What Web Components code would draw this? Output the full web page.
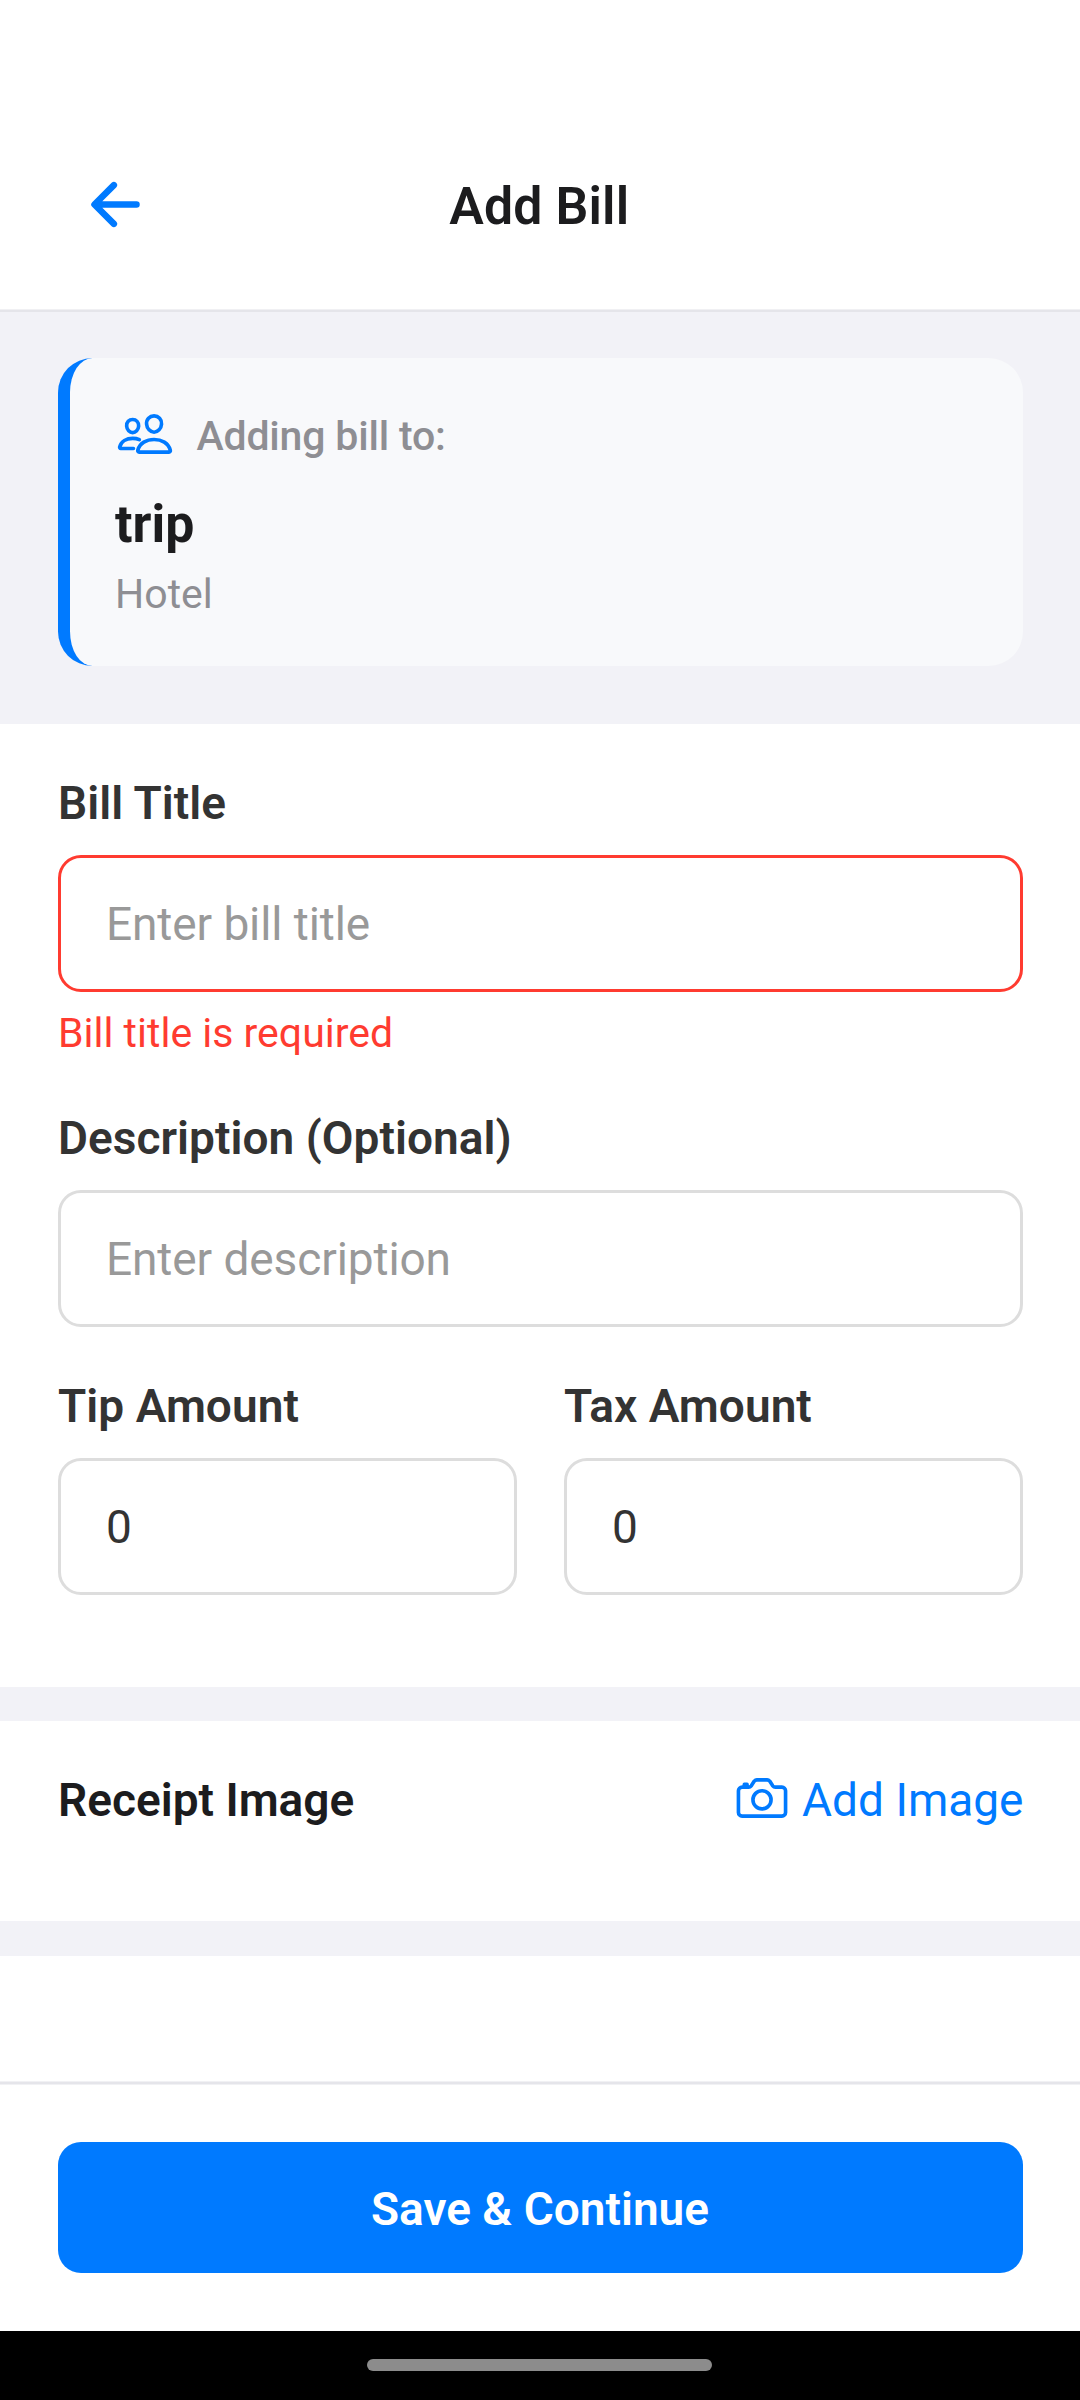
<!DOCTYPE html>
<html lang="en">
<head>
<meta charset="utf-8">
<title>Add Bill</title>
<style>
  html, body { margin: 0; padding: 0; background: #fff; }
  body { font-family: Roboto, "Noto Sans", sans-serif; width: 1080px; height: 2400px; overflow: hidden; }
</style>
</head>
<body>
<bill-screen></bill-screen>

<script>
const define = (name, html) => {
  const template = document.createElement('template');
  template.innerHTML = html;
  customElements.define(name, class extends HTMLElement {
    constructor() {
      super();
      this.attachShadow({ mode: 'open' }).append(template.content.cloneNode(true));
    }
  });
};

const ICONS = {
  back: '<path stroke-width="48" d="M244 400L100 256l144-144M120 256h292"/>',
  people: '<path stroke-width="32" d="M402 168c-2.93 40.67-33.1 72-66 72s-63.12-31.32-66-72c-3-42.31 26.37-72 66-72s69 30.46 66 72z"/>' +
    '<path stroke-width="32" d="M336 304c-65.17 0-127.84 32.37-143.54 95.41-2.08 8.34 3.15 16.59 11.72 16.59h263.65c8.57 0 13.77-8.25 11.72-16.59C463.85 335.36 401.18 304 336 304z"/>' +
    '<path stroke-width="32" d="M200 185.94c-2.34 32.48-26.72 58.06-53 58.06s-50.7-25.57-53-58.06C91.61 152.15 115.34 128 147 128s55.39 24.77 53 57.94z"/>' +
    '<path stroke-width="32" d="M206 306c-18.05-8.27-37.93-11.45-59-11.45-52 0-102.1 25.85-114.65 76.2-1.65 6.66 2.53 13.25 9.37 13.25H154"/>',
  camera: '<path stroke-width="32" d="M350.54 148.68l-26.62-42.06C318.31 100.08 310.62 96 302 96h-92c-8.62 0-16.31 4.08-21.92 10.62l-26.62 42.06C155.85 155.23 148.62 160 140 160H80a32 32 0 00-32 32v192a32 32 0 0032 32h352a32 32 0 0032-32V192a32 32 0 00-32-32h-59c-8.65 0-16.85-4.77-22.46-11.32z"/>' +
    '<circle stroke-width="32" cx="256" cy="272" r="80"/><path stroke-width="32" d="M124 158v-22h-24v22"/>'
};

customElements.define('line-icon', class extends HTMLElement {
  constructor() {
    super();
    this.attachShadow({ mode: 'open' });
  }
  connectedCallback() {
    this.shadowRoot.innerHTML = `
      <style>
        :host { display: block; flex: none; width: 58px; height: 58px; color: #007aff; }
        svg { display: block; width: 100%; height: 100%; }
      </style>
      <svg viewBox="0 0 512 512" fill="none" stroke="currentColor" stroke-linecap="round" stroke-linejoin="round">${ICONS[this.getAttribute('name')]}</svg>`;
  }
});

define('screen-header', `
  <style>
    :host { display: grid; grid-template-columns: 150px 1fr 150px; align-items: start; box-sizing: border-box;
            height: 312px; background: #fff; border-bottom: 2px solid #e5e5ea; box-shadow: inset 0 -1px #f0f0f3; }
    line-icon { width: 69px; height: 69px; margin: 169.7px 0 0 80.5px; }
    h1 { margin: 176px 1.5px 0 0; text-align: center; font-size: 51.75px; line-height: 61px; font-weight: 600;
         letter-spacing: .14px; color: #1c1c1e; }
  </style>
  <line-icon name="back"></line-icon>
  <h1><slot></slot></h1>`);

define('group-card', `
  <style>
    :host { display: block; box-sizing: border-box; height: 307.5px; margin: 46px 57px 58px 58px; padding: 46px 45px;
            border-left: 12px solid #007aff; border-radius: 34.5px; background: #f8f9fb; }
    .head { display: flex; align-items: flex-start; gap: 22.5px; height: 57.5px; font-size: 41px; line-height: 48px;
            font-weight: 500; letter-spacing: -.18px; color: #8e8e93; }
    .head line-icon { margin: 1px 0 0 1px; }
    .head span { display: block; margin-top: 8px; }
    .name { height: 61px; margin-top: 32.5px; font-size: 51.75px; line-height: 61px; font-weight: 700; color: #1c1c1e; }
    .kind { height: 48px; margin-top: 15px; font-size: 41px; line-height: 48px; color: #8e8e93; }
  </style>
  <div class="head"><line-icon name="people"></line-icon><span><slot name="caption"></slot></span></div>
  <div class="name"><slot name="title"></slot></div>
  <div class="kind"><slot name="kind"></slot></div>`);

customElements.define('form-field', class extends HTMLElement {
  constructor() {
    super();
    this.attachShadow({ mode: 'open' });
  }
  connectedCallback() {
    const label = this.getAttribute('label');
    const value = this.getAttribute('value');
    const error = this.getAttribute('error');
    this.shadowRoot.innerHTML = `
      <style>
        :host { display: block; flex: 1; min-width: 0; }
        .label { font-size: 46px; line-height: 54px; font-weight: 600; letter-spacing: .04px; color: #333; }
        .box { box-sizing: border-box; height: 137px; margin-top: 25px; padding: 39px 45px 0;
               border: 3px solid #ddd; border-radius: 23px; background: #fff;
               font-size: 46px; line-height: 54px; letter-spacing: -.1px; color: #999; }
        .box.filled { color: #333; }
        .box.invalid { border-color: #ff3b30; }
        .error { margin-top: 17px; font-size: 41px; line-height: 48px; color: #ff3b30; }
      </style>
      <div class="label">${label}</div>
      <div class="box ${value ? 'filled' : ''} ${error ? 'invalid' : ''}">${value || this.getAttribute('placeholder')}</div>
      ${error ? `<div class="error">${error}</div>` : ''}`;
  }
});

define('bill-form', `
  <style>
    :host { display: flex; flex-direction: column; box-sizing: border-box; height: 963px;
            padding: 52px 57px 0 58px; background: #fff; }
    form-field { flex: none; }
    .optional { margin-top: 54px; }
    .row { display: flex; gap: 47px; margin-top: 52px; }
    .row form-field { flex: 1; }
  </style>
  <form-field label="Bill Title" placeholder="Enter bill title" error="Bill title is required"></form-field>
  <form-field class="optional" label="Description (Optional)" placeholder="Enter description"></form-field>
  <div class="row">
    <form-field label="Tip Amount" value="0"></form-field>
    <form-field label="Tax Amount" value="0"></form-field>
  </div>`);

define('receipt-section', `
  <style>
    :host { display: flex; justify-content: space-between; align-items: flex-start; box-sizing: border-box;
            height: 200px; margin: 34px 0 35px; padding: 0 56.5px 0 58px; background: #fff;
            font-size: 46px; line-height: 54px; }
    .title { margin-top: 52px; font-weight: 600; color: #1c1c1e; }
    .action { display: flex; gap: 11px; margin-top: 48px; color: #007aff; }
    .action slot { display: block; margin-top: 4px; }
  </style>
  <div class="title"><slot></slot></div>
  <div class="action"><line-icon name="camera"></line-icon><slot name="action"></slot></div>`);

define('save-bar', `
  <style>
    :host { display: block; box-sizing: border-box; height: 249px; padding: 58px 57px 58px 58px; background: #fff;
            border-top: 2px solid #e5e5ea; box-shadow: 0 -1px #f1f1f4, inset 0 1px #f1f1f4; }
    button { display: block; box-sizing: border-box; width: 100%; height: 131px; padding: 3px 1px 0 0; border: 0;
             border-radius: 23px; background: #007aff; color: #fff; font: 600 46px/54px Roboto, sans-serif; }
  </style>
  <button><slot></slot></button>`);

define('gesture-bar', `
  <style>
    :host { display: flex; justify-content: center; align-items: flex-start; box-sizing: border-box;
            height: 69px; padding: 28px 1px 0 0; background: #000; }
    i { display: block; width: 345px; height: 12px; border-radius: 6px; background: #8c8c8c; }
  </style>
  <i></i>`);

define('bill-screen', `
  <style>
    :host { display: flex; flex-direction: column; height: 2400px; background: #fff; }
    main { flex: 1; min-height: 0; display: flex; flex-direction: column; background: #f2f2f7; }
    main > * { flex: none; }
    main > .rest { flex: 1; background: #fff; }
    screen-header, save-bar, gesture-bar { flex: none; }
  </style>
  <screen-header>Add Bill</screen-header>
  <main>
    <group-card>
      <span slot="caption">Adding bill to:</span>
      <span slot="title">trip</span>
      <span slot="kind">Hotel</span>
    </group-card>
    <bill-form></bill-form>
    <receipt-section>Receipt Image<span slot="action">Add Image</span></receipt-section>
    <div class="rest"></div>
  </main>
  <save-bar>Save &amp; Continue</save-bar>
  <gesture-bar></gesture-bar>`);
</script>
</body>
</html>
